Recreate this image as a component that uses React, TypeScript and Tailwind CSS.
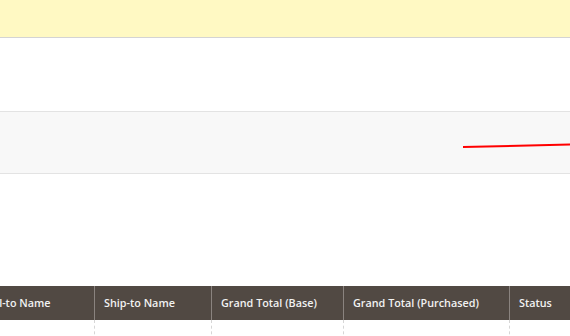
import React from "react";

const cols = [
  { label: "Bill-to Name", w: 118 },
  { label: "Ship-to Name", w: 117 },
  { label: "Grand Total (Base)", w: 132 },
  { label: "Grand Total (Purchased)", w: 166 },
  { label: "Status", w: 120 },
];

export default function App() {
  return (
    <div
      className="relative w-[570px] h-[336px] overflow-hidden bg-white"
      style={{ fontFamily: "'Open Sans', 'Noto Sans', sans-serif" }}
    >
      <div className="h-[37px] bg-[#fff9c3] border-b border-[#d4d4d4] box-content" />
      <div className="h-[73px]" />
      <div className="h-[61px] bg-[#f8f8f8] border-y border-[#e3e3e3] box-content" />
      <div className="h-[112px]" />
      <div className="flex ml-[-23px]">
        {cols.map((c, i) => (
          <div key={c.label} className="flex flex-col shrink-0" style={{ width: c.w }}>
            <div
              className={`h-[34px] bg-[#514943] text-[#f2f2f2] text-[10.8px] font-semibold flex items-center pl-[9px] whitespace-nowrap ${
                i < cols.length - 1 ? "border-r border-[#8a837f]" : ""
              }`}
            >
              {c.label}
            </div>
            <div
              className={`h-[20px] ${i < cols.length - 1 ? "border-r border-dashed border-[#d6d6d6]" : ""}`}
            />
          </div>
        ))}
      </div>
      <svg className="absolute left-0 top-0" width="570" height="336">
        <line x1="463" y1="147" x2="570" y2="144.5" stroke="#ff0000" strokeWidth="2" />
      </svg>
    </div>
  );
}
